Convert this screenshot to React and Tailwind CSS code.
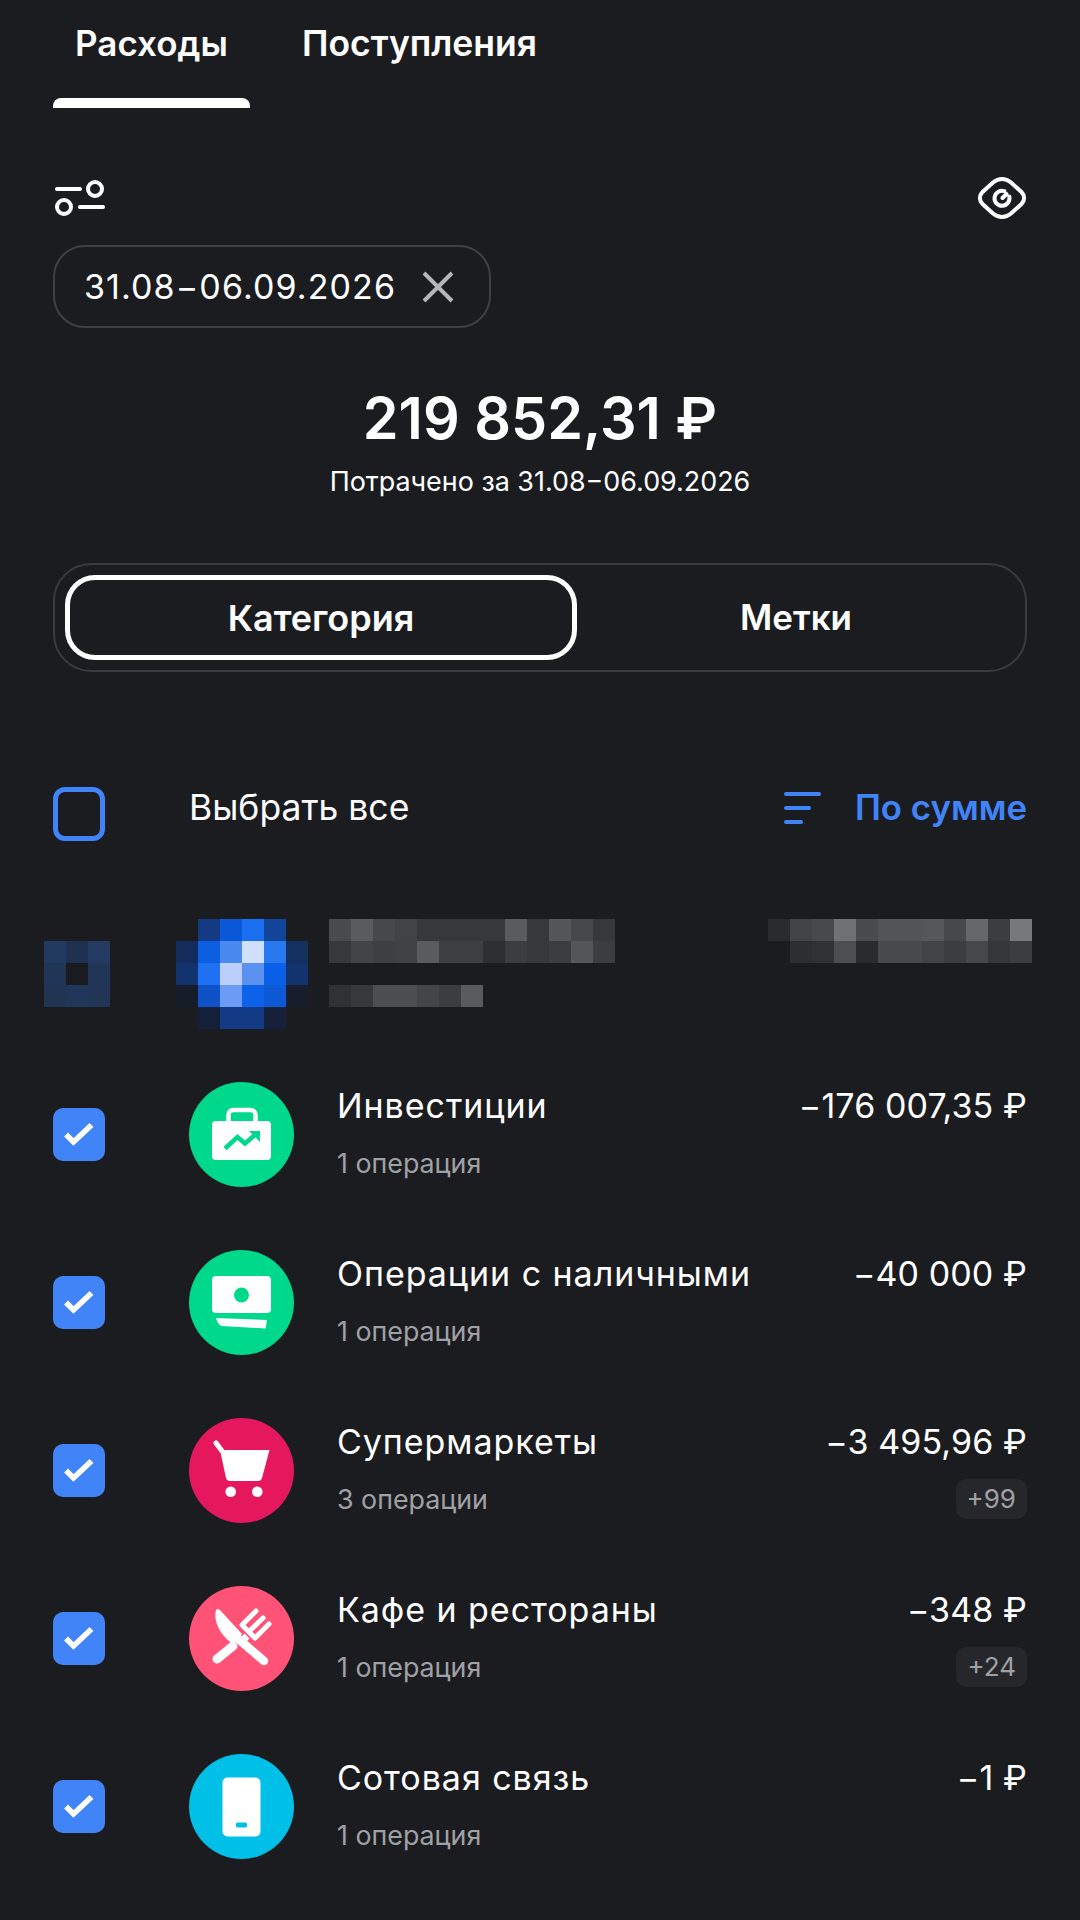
const avatar = [
  [null, "#133a82", "#0a58d8", "#1a6ff0", "#12449a", null],
  ["#142c5c", "#0b5fe0", "#4a8af0", "#d0dffb", "#2a78f0", "#13305f"],
  ["#12336e", "#1f70f2", "#bccffa", "#5b91f0", "#0b60e8", "#12336e"],
  ["#171c2a", "#0f52c8", "#6a9cf5", "#0c62e8", "#0d58d5", "#171d2c"],
  [null, "#14203a", "#123a85", "#123a85", "#16203a", null],
];
const check = [
  ["#233a60", "#1f3050", "#243a62"],
  ["#213556", "#1a1b20", "#213556"],
  ["#213452", "#20375a", "#213556"],
];
const nameBlur = [
  ["#4a4b4f", "#5a5b5f", "#47484c", "#424347", "#37383c", "#37383c", "#37383c", "#37383c", "#5a5b5f", "#37383c", "#55565a", "#47484c", "#37383c"],
  ["#37383c", "#434448", "#3f4044", "#414246", "#5a5b5f", "#3e3f43", "#3e3f43", "#2e2f33", "#3c3d41", "#37383c", "#3c3d41", "#55565a", "#3c3d41"],
  [null, null, null, null, null, null, null, null, null, null, null, null, null],
  ["#303135", "#38393d", "#4c4d51", "#4c4d51", "#444549", "#3c3d41", "#5a5b5f", null, null, null, null, null, null],
];
const sumBlur = [
  ["#2a2b2f", "#424347", "#48494d", "#707174", "#4a4b4f", "#535458", "#535458", "#56575b", "#47484c", "#66676b", "#3c3d41", "#77787c"],
  [null, "#2d2e32", "#303135", "#4d4e52", "#2a2b2f", "#48494d", "#48494d", "#424347", "#3c3d41", "#46474b", "#36373b", "#3c3d41"],
];

function Mosaic({ rows, className }) {
  const cols = rows[0].length;
  return (
    <svg className={className} width={cols * 22} height={rows.length * 22} viewBox={`0 0 ${cols * 22} ${rows.length * 22}`} shapeRendering="crispEdges">
      {rows.map((r, y) => r.map((c, x) => c && <rect key={x + "-" + y} x={x * 22} y={y * 22} width="22" height="22" fill={c} />))}
    </svg>
  );
}

function Check() {
  return (
    <div className="h-[53px] w-[52px] shrink-0 rounded-[10px] bg-[#4084f7]">
      <svg width="52" height="53" viewBox="0 0 52 53" fill="none">
        <path d="M13 26.5 L20.5 34 L38.5 17" stroke="#fff" strokeWidth="5.5" />
      </svg>
    </div>
  );
}

function CaseIcon() {
  return (
    <svg width="105" height="105" viewBox="0 0 105 105" fill="none">
      <rect x="39.5" y="28" width="27" height="16" rx="5" stroke="#fff" strokeWidth="4.5" />
      <rect x="23" y="39" width="59" height="39" rx="4" fill="#fff" />
      <path d="M36 66.5 L48.5 55 L56 61.5 L67 52" stroke="#00d98b" strokeWidth="4.5" />
      <path d="M60 49 H71 V60 Z" fill="#00d98b" />
    </svg>
  );
}
function CashIcon() {
  return (
    <svg width="105" height="105" viewBox="0 0 105 105" fill="none">
      <rect x="23" y="26" width="59" height="37" rx="4" fill="#fff" />
      <circle cx="52.5" cy="45" r="7.5" fill="#00d98b" />
      <path d="M27 68 L78 70 L76.5 78.5 L33 76 Q29 75 27 68 Z" fill="#fff" />
    </svg>
  );
}
function CartIcon() {
  return (
    <svg width="105" height="105" viewBox="0 0 105 105" fill="none">
      <path d="M27 25 L33 33" stroke="#fff" strokeWidth="5" strokeLinecap="round" />
      <path d="M31 32 H80.5 L73 60 Q72 63 69 63 H41 Q38 63 37 60 Z" fill="#fff" />
      <circle cx="41.7" cy="73.7" r="5.3" fill="#fff" />
      <circle cx="68.3" cy="73.7" r="5.3" fill="#fff" />
    </svg>
  );
}
function CafeIcon() {
  return (
    <svg width="105" height="105" viewBox="0 0 105 105" fill="none">
      <path d="M27 24 C24 36 32 50 44 58 L53 48 L31 24 Q28 22 27 24 Z" fill="#fff" />
      <path d="M47 51 L75 75" stroke="#fff" strokeWidth="8.5" strokeLinecap="round" />
      <path d="M28 73 L44 60" stroke="#fff" strokeWidth="9" strokeLinecap="round" />
      <path d="M53 39 L66 52 M53 39 L67 25 M60 45.5 L74 32 M66.5 51.5 L80 38" stroke="#fff" strokeWidth="5" strokeLinecap="round" />
      <path d="M58 50 L50 58" stroke="#fff" strokeWidth="7" />
    </svg>
  );
}
function PhoneIcon() {
  return (
    <svg width="105" height="105" viewBox="0 0 105 105" fill="none">
      <rect x="33.5" y="23.5" width="38" height="59" rx="5" fill="#fff" />
      <rect x="47" y="68.5" width="11" height="5" rx="1.5" fill="#00c0e8" />
    </svg>
  );
}

const rows = [
  { bg: "bg-[#00d98b]", Icon: CaseIcon, title: "Инвестиции", sub: "1 операция", amount: "−176 007,35 ₽" },
  { bg: "bg-[#00d98b]", Icon: CashIcon, title: "Операции с наличными", sub: "1 операция", amount: "−40 000 ₽" },
  { bg: "bg-[#e5185e]", Icon: CartIcon, title: "Супермаркеты", sub: "3 операции", amount: "−3 495,96 ₽", badge: "+99" },
  { bg: "bg-[#ff5277]", Icon: CafeIcon, title: "Кафе и рестораны", sub: "1 операция", amount: "−348 ₽", badge: "+24" },
  { bg: "bg-[#00c0e8]", Icon: PhoneIcon, title: "Сотовая связь", sub: "1 операция", amount: "−1 ₽" },
];

export default function App() {
  return (
    <div className="h-[1920px] w-[1080px] overflow-hidden bg-[#1b1c20] px-[53px] font-['Inter',sans-serif] text-white">
      {/* Tabs */}
      <div className="flex h-[108px] items-start gap-[52px]">
        <div className="relative h-[108px] w-[197px] text-center text-[35px] font-semibold leading-[87px]">
          Расходы
          <div className="absolute bottom-0 left-0 h-[10px] w-full rounded-t-[8px] bg-white" />
        </div>
        <div className="text-[35.5px] font-semibold leading-[87px]">Поступления</div>
      </div>

      {/* Toolbar */}
      <div className="mt-[66px] flex h-[48px] items-center justify-between">
        <svg width="52" height="36" viewBox="0 0 52 36" fill="none" stroke="#fff" strokeWidth="4">
          <path d="M4 9 H27" strokeLinecap="round" />
          <circle cx="42" cy="9" r="7" />
          <circle cx="11" cy="27" r="7" />
          <path d="M27 27 H50" strokeLinecap="round" />
        </svg>
        <svg width="50" height="44" viewBox="0 0 50 44" fill="none" stroke="#fff" strokeWidth="4">
          <path d="M25 3 C29 3 31.5 4.5 34 6.5 L44.5 16 C48 19.5 48 24.5 44.5 28 L34 37.5 C31.5 39.5 29 41 25 41 C21 41 18.5 39.5 16 37.5 L5.5 28 C2 24.5 2 19.5 5.5 16 L16 6.5 C18.5 4.5 21 3 25 3 Z" />
          <path d="M27.5 15.2 A7.5 7.5 0 1 0 32.3 20.5" strokeLinecap="round" />
          <path d="M29.5 18 L25.5 22" strokeLinecap="round" />
        </svg>
      </div>

      {/* Date chip */}
      <div className="mt-[23px] flex h-[83px] w-[438px] items-center rounded-[32px] border-2 border-[#3f4045] pl-[29px]">
        <span className="text-[34px] leading-none tracking-[1.1px]">31.08−06.09.2026</span>
        <svg className="ml-[25px]" width="34" height="34" viewBox="0 0 34 34" fill="none" stroke="#b5b6b9" strokeWidth="4">
          <path d="M3 3 L31 31 M31 3 L3 31" />
        </svg>
      </div>

      {/* Amount */}
      <div className="mt-[55px] text-center text-[57.5px] font-semibold leading-[70px]">219 852,31 ₽</div>
      <div className="mt-[12px] text-center text-[26.9px] leading-[32px]">Потрачено за 31.08−06.09.2026</div>

      {/* Segmented */}
      <div className="mt-[66px] flex h-[109px] items-center rounded-[38px] border-2 border-[#3a3b40] px-[10px]">
        <div className="flex h-[85px] w-[512px] items-center justify-center rounded-[30px] border-[5px] border-white text-[36px] font-semibold">
          Категория
        </div>
        <div className="flex-1 text-center text-[35px] font-semibold">Метки</div>
      </div>

      {/* Select all */}
      <div className="mt-[112px] flex h-[60px] items-center">
        <div className="h-[54px] w-[52px] shrink-0 rounded-[12px] border-[5px] border-[#4084f7]" />
        <div className="-mt-[12px] ml-[84px] text-[35.5px] leading-none">Выбрать все</div>
        <div className="-mt-[12px] ml-auto flex items-center gap-[34px] text-[#4084f7]">
          <svg width="37" height="32" viewBox="0 0 37 32" fill="none" stroke="#4084f7" strokeWidth="4" strokeLinecap="round">
            <path d="M2 2 H35 M2 16 H25 M2 30 H17" />
          </svg>
          <span className="-mt-[2px] text-[34.8px] font-semibold leading-none">По сумме</span>
        </div>
      </div>

      {/* Blurred row */}
      <div className="-ml-[9px] -mr-[5px] mt-[38px] flex h-[168px] items-start">
        <Mosaic rows={check} className="mt-[59px]" />
        <Mosaic rows={avatar} className="ml-[66px] mt-[37px]" />
        <Mosaic rows={nameBlur} className="ml-[21px] mt-[37px]" />
        <Mosaic rows={sumBlur} className="ml-auto mt-[37px]" />
      </div>

      {/* Rows */}
      {rows.map(({ bg, Icon, title, sub, amount, badge }) => (
        <div key={title} className="flex h-[168px] items-center">
          <Check />
          <div className={`ml-[84px] flex h-[105px] w-[105px] shrink-0 items-center justify-center rounded-full ${bg}`}>
            <Icon />
          </div>
          <div className="-mt-[1px] ml-[43px] flex h-[95px] flex-col justify-between">
            <div className="text-[34px] leading-[40px] tracking-[0.95px]">{title}</div>
            <div className="text-[26.8px] leading-[36px] text-[#a0a1a5]">{sub}</div>
          </div>
          <div className="ml-auto flex h-[94px] flex-col items-end self-center">
            <div className="-mt-[1px] text-[34px] leading-[40px] tracking-[0.1px]">{amount}</div>
            {badge && (
              <div className="mt-[17px] rounded-[10px] bg-[#26272b] px-[11px] text-[26px] leading-[40px] text-[#a0a1a5]">{badge}</div>
            )}
          </div>
        </div>
      ))}
    </div>
  );
}
